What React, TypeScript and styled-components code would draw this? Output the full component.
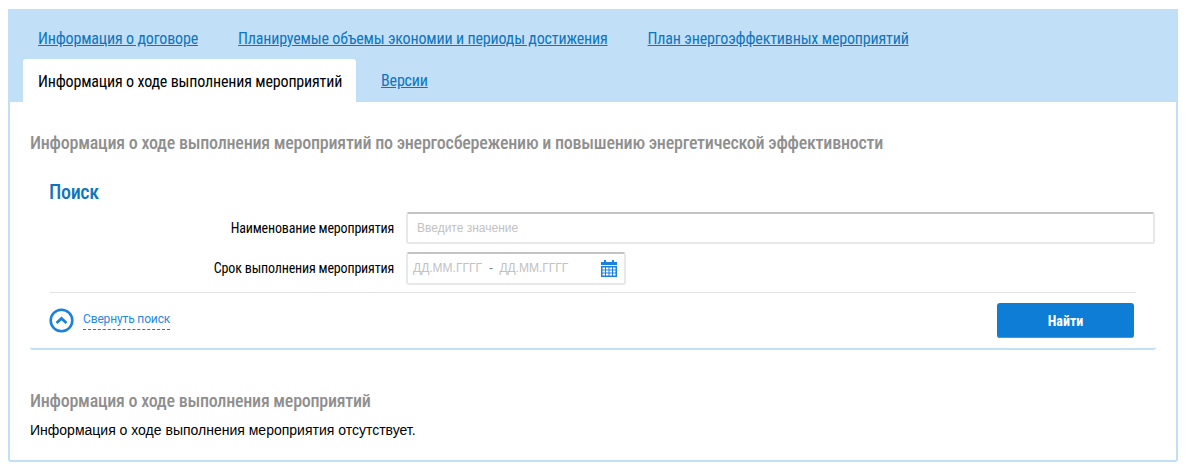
import styled, { createGlobalStyle } from "styled-components";

const Global = createGlobalStyle`
  html, body { margin: 0; padding: 0; background: #fff; }
  body { font-family: "Liberation Sans", Arial, sans-serif; }
`;

const condensed = `font-family: Roboto, "Liberation Sans", sans-serif; font-stretch: 75%;`;

const Page = styled.div`
  width: 1170px;
  margin: 9px 0 0 8px;
  height: 453px;
  box-sizing: border-box;
  display: flex;
  flex-direction: column;
  border: solid #c1dff7;
  border-width: 0 2px 2px;
  border-radius: 0 0 3px 3px;
`;
const TabsPanel = styled.div`
  background: #c1dff7;
  margin: 0 -2px;
  height: 93px;
  padding: 20px 0 0 15px;
  box-sizing: border-box;
  display: flex;
  flex-direction: column;
  justify-content: space-between;
`;
const TabRow = styled.div`
  display: flex;
  align-items: center;
`;
const TabLink = styled.a`
  ${condensed}
  font-size: 16px;
  line-height: 20px;
  letter-spacing: -0.17px;
  color: #0f75bd;
  text-decoration: underline;
  margin: 0 25px 0 15px;
  white-space: nowrap;
`;
const ActiveTab = styled.div`
  ${condensed}
  font-size: 16px;
  letter-spacing: -0.17px;
  height: 43px;
  line-height: 45px;
  padding: 0 14px 0 15px;
  width: 333px;
  box-sizing: border-box;
  background: #fff;
  color: #000;
  border-radius: 3px 3px 0 0;
  white-space: nowrap;
  margin-right: 10px;
`;
const Body = styled.div`
  flex: 1;
  padding: 0 20px;
`;
const Title = styled.h2`
  ${condensed}
  margin: 30px 0 0;
  font-size: 18px;
  line-height: 22px;
  font-weight: 500;
  letter-spacing: -0.235px;
  color: #8f8f8f;
`;
const SearchBox = styled.section`
  margin-top: 26px;
  height: 170px;
  box-sizing: border-box;
  padding: 0 0 0 20px;
  border-bottom: 2px solid #c1dff7;
  border-radius: 0 0 3px 3px;
  width: 1126px;
`;
const SearchTitle = styled.h3`
  ${condensed}
  margin: 0 0 0 -1px;
  font-size: 20px;
  line-height: 24px;
  font-weight: 500;
  letter-spacing: -0.35px;
  color: #0f75bd;
`;
const FormRow = styled.div`
  display: flex;
  align-items: center;
  height: 32px;
  margin-bottom: 8px;
`;
const Fields = styled.div`
  margin-top: 8px;
`;
const Label = styled.label`
  ${condensed}
  width: 344px;
  text-align: right;
  font-size: 14px;
  letter-spacing: -0.17px;
  color: #000;
  margin-right: 12px;
  white-space: nowrap;
`;
const TextInput = styled.div`
  box-sizing: border-box;
  width: 749px;
  height: 32px;
  border: 2px solid #e6e8ea;
  border-top-color: #c4c4c4;
  border-radius: 3px;
  padding-left: 9px;
  font-family: "Liberation Sans", sans-serif;
  font-size: 12px;
  line-height: 28px;
  color: #c2c2c2;
`;
const DateInput = styled.div`
  box-sizing: border-box;
  width: 220px;
  height: 33px;
  border: 2px solid #e6e8ea;
  border-top-color: #c4c4c4;
  border-radius: 3px;
  padding: 0 7px 0 5px;
  display: flex;
  align-items: center;
  font-family: "Liberation Sans", sans-serif;
  font-size: 12px;
  color: #c2c2c2;
`;
const Dash = styled.span`
  color: #777;
  margin: 0 6.5px 0 7px;
`;
const CalendarIcon = styled.svg`
  margin-left: auto;
`;
const Footer = styled.div`
  border-top: 1px solid #e3e3e3;
  margin-right: 20px;
  padding: 10px 2px 0 0;
  display: flex;
  align-items: center;
  justify-content: space-between;
`;
const Toggle = styled.div`
  display: flex;
  align-items: center;
  gap: 9px;
  margin-left: -1px;
`;
const ToggleText = styled.a`
  font-family: Roboto, sans-serif;
  font-size: 12px;
  line-height: 16px;
  letter-spacing: -0.14px;
  color: #2a87dc;
  border-bottom: 1px dashed #0f78d4;
  padding-bottom: 2px;
`;
const Button = styled.button`
  ${condensed}
  width: 137px;
  height: 35px;
  border: 0;
  border-radius: 3px;
  background: #0d7dd6;
  box-shadow: inset 0 -1px 0 #4a97d6;
  color: #fff;
  font-size: 14px;
  font-weight: 700;
`;
const ResultTitle = styled.h2`
  ${condensed}
  margin: 40px 0 0;
  font-size: 18px;
  line-height: 22px;
  font-weight: 500;
  letter-spacing: -0.25px;
  color: #8f8f8f;
`;
const ResultText = styled.p`
  margin: 10px 0 0;
  font-size: 14px;
  line-height: 16px;
  color: #000;
`;

export default function App() {
  return (
    <>
      <Global />
      <Page>
        <TabsPanel>
          <TabRow>
            <TabLink>Информация о договоре</TabLink>
            <TabLink>Планируемые объемы экономии и периоды достижения</TabLink>
            <TabLink>План энергоэффективных мероприятий</TabLink>
          </TabRow>
          <TabRow>
            <ActiveTab>Информация о ходе выполнения мероприятий</ActiveTab>
            <TabLink>Версии</TabLink>
          </TabRow>
        </TabsPanel>
        <Body>
          <Title>Информация о ходе выполнения мероприятий по энергосбережению и повышению энергетической эффективности</Title>
          <SearchBox>
            <SearchTitle>Поиск</SearchTitle>
            <Fields>
              <FormRow>
                <Label>Наименование мероприятия</Label>
                <TextInput>Введите значение</TextInput>
              </FormRow>
              <FormRow>
                <Label>Срок выполнения мероприятия</Label>
                <DateInput>
                  <span>ДД.ММ.ГГГГ</span>
                  <Dash>-</Dash>
                  <span>ДД.ММ.ГГГГ</span>
                  <CalendarIcon width="16" height="17" viewBox="0 0 16 17">
                    <path fill="#1a82de" d="M3 0h2v2h6V0h2v2h3v3H0V2h3z" />
                    <path fill="#1a82de" fillRule="evenodd" d="M0 6h16v11H0zM1.5 7.5v2h2.500v-2zm3.500 0v2h2.500v-2zm3.500 0v2h2.500v-2zm3.500 0v2h2.500v-2zM1.500 10.500v2h2.500v-2zm3.500 0v2h2.500v-2zm3.500 0v2h2.500v-2zm3.500 0v2h2.500v-2zM1.500 13.500v2h2.500v-2zm3.500 0v2h2.500v-2zm3.500 0v2h2.500v-2zm3.500 0v2h2.500v-2z" />
                  </CalendarIcon>
                </DateInput>
              </FormRow>
            </Fields>
            <Footer>
              <Toggle>
                <svg width="25" height="25" viewBox="0 0 25 25" fill="none">
                  <circle cx="12.5" cy="12.5" r="10.8" stroke="#1a82de" strokeWidth="2.6" />
                  <path d="M7.5 15l5-4.500 5 4.500" stroke="#1a82de" strokeWidth="2.800" />
                </svg>
                <ToggleText>Свернуть поиск</ToggleText>
              </Toggle>
              <Button>Найти</Button>
            </Footer>
          </SearchBox>
          <ResultTitle>Информация о ходе выполнения мероприятий</ResultTitle>
          <ResultText>Информация о ходе выполнения мероприятия отсутствует.</ResultText>
        </Body>
      </Page>
    </>
  );
}
